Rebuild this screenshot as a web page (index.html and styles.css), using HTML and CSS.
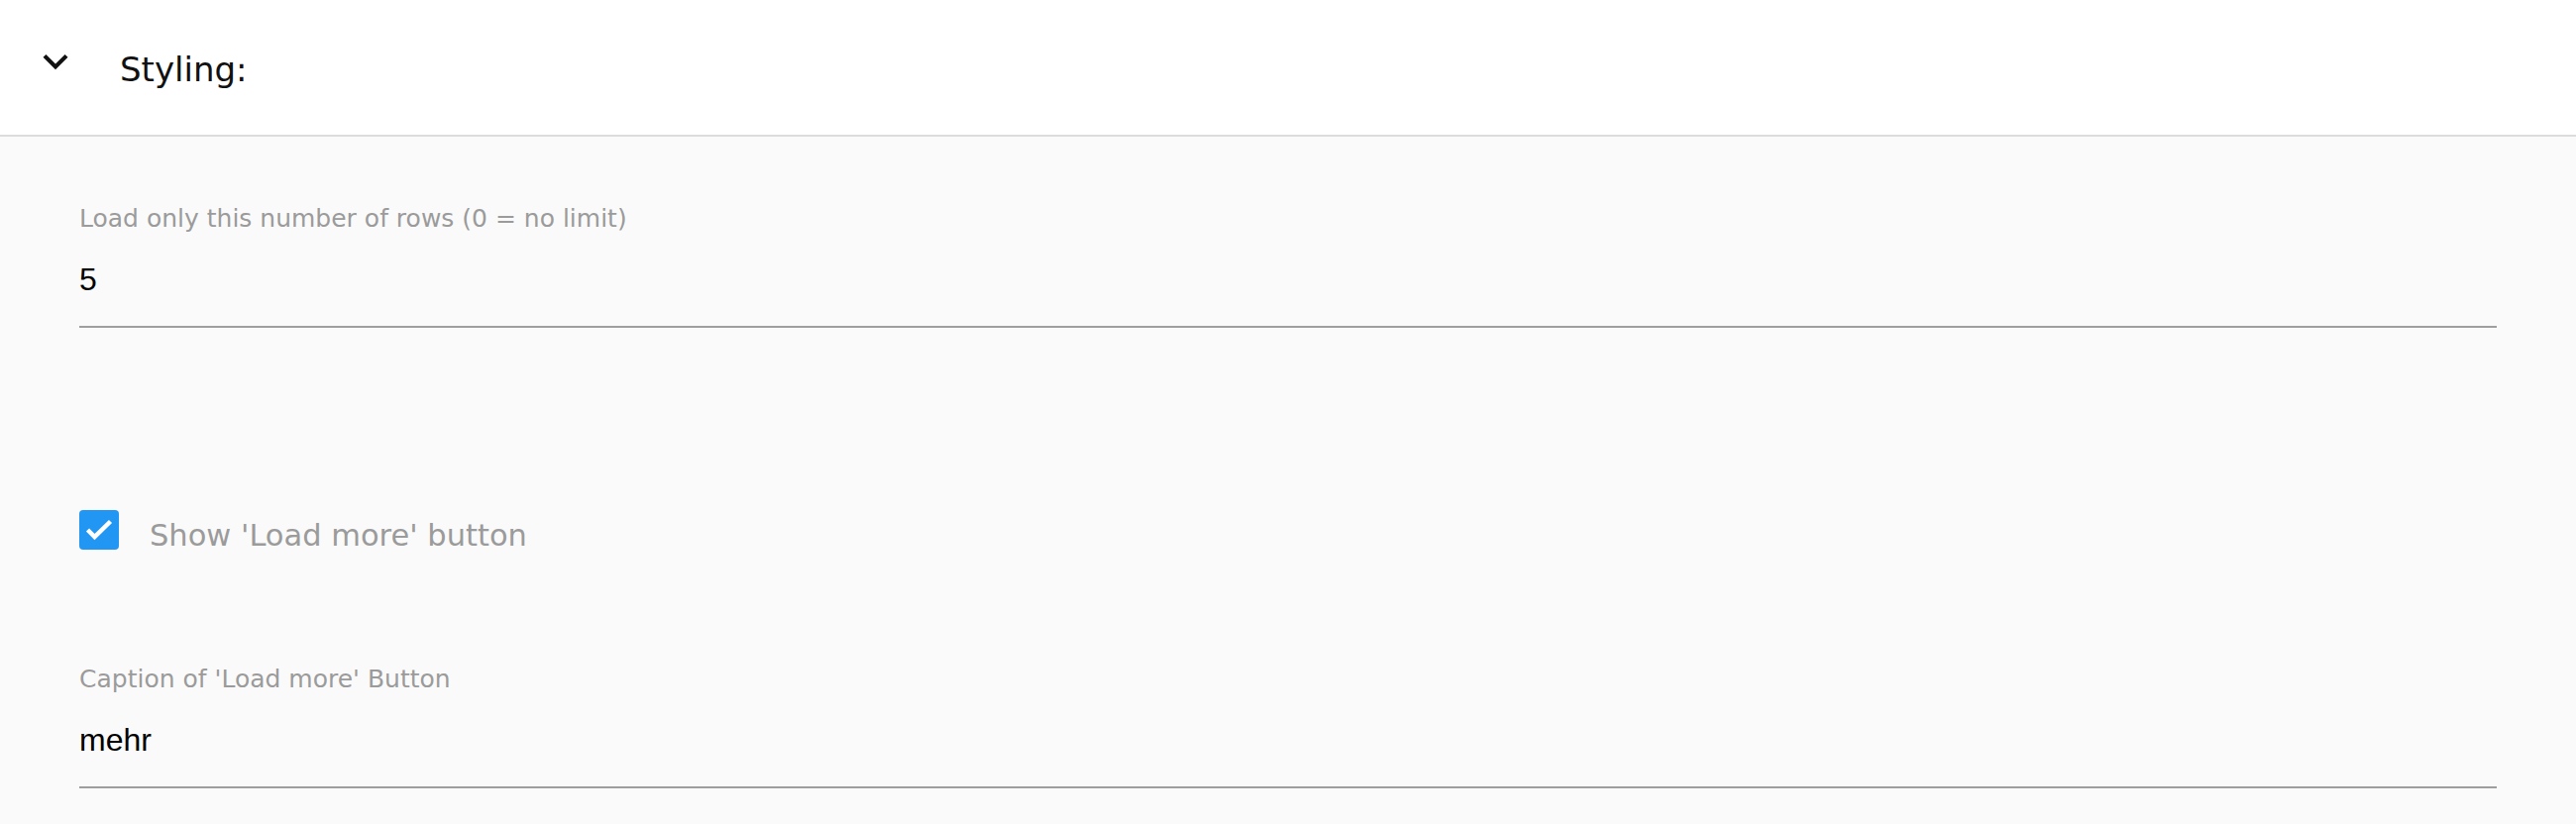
FILE: index.html
```html
<!DOCTYPE html>
<html lang="de">
<head>
  <meta charset="UTF-8" />
  <meta name="viewport" content="width=device-width, initial-scale=1" />
  <title>Styling</title>
  <link rel="stylesheet" href="styles.css">
</head>
<body>

  <!-- Collapsible section header -->
  <header class="panel-head">
    <svg class="toggle-icon" viewBox="0 0 24 24" aria-hidden="true">
      <path d="M16.59 8.59L12 13.17 7.41 8.59 6 10l6 6 6-6z" />
    </svg>
    <h2 class="panel-title">Styling:</h2>
  </header>

  <main class="panel-body">
    <div class="field">
      <label class="field-label" for="rowLimit">Load only this number of rows (0 = no limit)</label>
      <input class="field-input" type="text" id="rowLimit" name="rowLimit" value="5" />
    </div>

    <label class="check-row">
      <span class="check-box">
        <svg viewBox="0 0 40 40" aria-hidden="true">
          <polyline points="8.5,20 15.5,27 31.5,11.5" />
        </svg>
      </span>
      <span class="check-text">Show 'Load more' button</span>
    </label>

    <div class="field field-caption">
      <label class="field-label" for="moreCaption">Caption of 'Load more' Button</label>
      <input class="field-input" type="text" id="moreCaption" name="moreCaption" value="mehr" />
    </div>
  </main>

</body>
</html>
```

FILE: styles.css
```css
body {
  margin: 0;
  background: #fafafa;
  font-family: "DejaVu Sans", Verdana, sans-serif;
}
.panel-head {
  display: flex;
  align-items: flex-start;
  box-sizing: border-box;
  height: 138px;
  padding: 37px 0 0 31px;
  background: #fff;
  border-bottom: 2px solid #dcdcdc;
}
.toggle-icon {
  width: 50px;
  height: 50px;
  fill: #111;
}
.panel-title {
  margin: 13px 0 0 40px;
  font-size: 34px;
  font-weight: normal;
  line-height: 40px;
  color: #111;
}
.panel-body {
  padding: 68px 80px 0;
}
.field-label {
  display: block;
  font-size: 25px;
  line-height: 30px;
  color: #9b9b9b;
}
.field-input {
  display: block;
  box-sizing: content-box;
  width: 100%;
  height: 40px;
  margin: 26px 0 0;
  padding: 0 0 27px;
  border: none;
  border-bottom: 2px solid #9e9e9e;
  background: transparent;
  font-family: "Liberation Sans", Arial, sans-serif;
  font-size: 32px;
  line-height: 40px;
  color: #000;
  outline: none;
}
.check-row {
  display: flex;
  align-items: flex-start;
  height: 40px;
  margin-top: 184px;
}
.check-box {
  flex: none;
  width: 40px;
  height: 40px;
  border-radius: 4px;
  background: #2196f3;
}
.check-box svg {
  display: block;
  width: 40px;
  height: 40px;
  fill: none;
  stroke: #fff;
  stroke-width: 4.5;
}
.check-text {
  margin: 6px 0 0 31px;
  font-size: 30.5px;
  line-height: 40px;
  color: #9b9b9b;
}
.field-caption {
  margin-top: 116px;
}
```
